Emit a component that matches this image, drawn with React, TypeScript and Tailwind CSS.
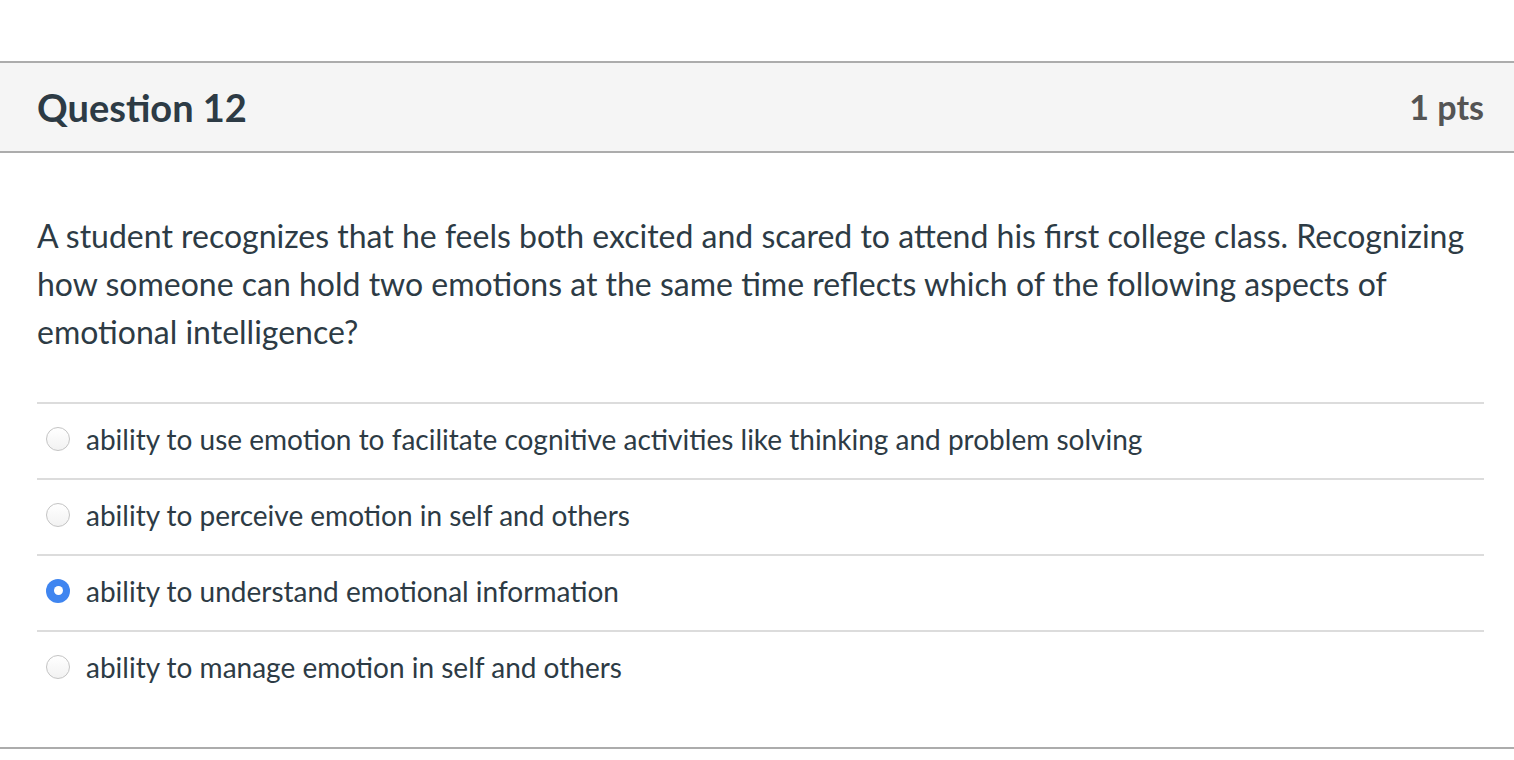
import React from "react";

const answers = [
  { text: "ability to use emotion to facilitate cognitive activities like thinking and problem solving", selected: false },
  { text: "ability to perceive emotion in self and others", selected: false },
  { text: "ability to understand emotional information", selected: true },
  { text: "ability to manage emotion in self and others", selected: false },
];

function Radio({ selected }: { selected: boolean }) {
  if (selected) {
    return (
      <span className="flex h-[24px] w-[24px] shrink-0 items-center justify-center rounded-full bg-[#3f85f0]">
        <span className="h-[9px] w-[9px] rounded-full bg-white" />
      </span>
    );
  }
  return (
    <span className="h-[24px] w-[24px] shrink-0 rounded-full border border-[#c4c4c4] bg-gradient-to-b from-[#ffffff] to-[#f2f2f2]" />
  );
}

export default function App() {
  return (
    <div className="min-h-[760px] bg-white text-[#2d3b45]" style={{ fontFamily: "Lato, 'Noto Sans', sans-serif" }}>
      <div className="h-[61px]" />
      <div className="flex h-[92px] items-center justify-between border-y-2 border-[#acacac] bg-[#f5f5f5] pl-[37px] pr-[30px]">
        <h2 className="text-[38px] font-bold leading-none text-[#2d3b45]">Question 12</h2>
        <span className="text-[34px] font-bold leading-none text-[#545454]">1 pts</span>
      </div>
      <div className="px-[37px] pt-[59px]">
        <p className="text-[32px] leading-[48px] text-[#2d3b45]">
          A student recognizes that he feels both excited and scared to attend his first college class. Recognizing how someone can hold two emotions at the same time reflects which of the following aspects of emotional intelligence?
        </p>
        <div className="mt-[46px] mr-[-7px]">
          {answers.map((a, i) => (
            <div key={i} className="flex h-[76px] items-center gap-[16px] border-t-2 border-[#dcdcdc] pb-[5px] pl-[9px]">
              <Radio selected={a.selected} />
              <span className="text-[28px] text-[#2d3b45]">{a.text}</span>
            </div>
          ))}
        </div>
      </div>
      <div className="mt-[41px] border-t-2 border-[#acacac]" />
    </div>
  );
}
